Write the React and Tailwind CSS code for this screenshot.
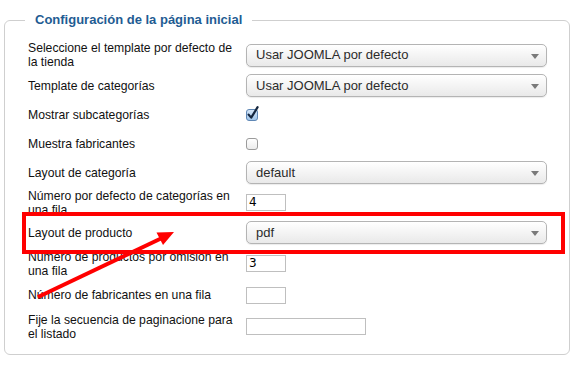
import React from "react";

const Select = ({ value }) => (
  <div className="relative w-[301px] h-[23px] rounded-[5px] border border-[#b4b4b4] bg-gradient-to-b from-white to-[#e9e9e9] shadow-[0_1px_1px_rgba(0,0,0,0.08)] flex items-center pl-[9px] text-[13px] text-[#2b2b2b]">
    <span>{value}</span>
    <svg className="absolute right-[7px] top-[9px]" width="8" height="5" viewBox="0 0 8 5">
      <polygon points="0,0 8,0 4,5" fill="#7a7a7a" />
    </svg>
  </div>
);

const Checkbox = ({ checked }) =>
  checked ? (
    <svg width="14" height="16" viewBox="0 0 14 16" className="-mt-[3px]">
      <defs>
        <linearGradient id="cb" x1="0" y1="0" x2="0" y2="1">
          <stop offset="0" stopColor="#d7e7f8" />
          <stop offset="1" stopColor="#9ec4ea" />
        </linearGradient>
      </defs>
      <rect x="0.5" y="3.5" width="11" height="11" rx="2.5" fill="url(#cb)" stroke="#5f87b5" />
      <path d="M2.6 8.6 L5.2 11.6 L11.6 1.2" fill="none" stroke="#14263f" strokeWidth="2.2" strokeLinecap="round" strokeLinejoin="round" />
    </svg>
  ) : (
    <div className="w-[12px] h-[12px] rounded-[3px] border border-[#9b9b9b] bg-gradient-to-b from-white to-[#ececec]" />
  );

const Input = ({ value, wide }) => (
  <div
    className={`${wide ? "w-[120px]" : "w-[40px]"} h-[17px] border border-[#bfbfbf] bg-white pl-[2px] text-[12px] leading-[15px] text-black`}
    style={{ fontFamily: '"DejaVu Sans", sans-serif' }}
  >
    {value}
  </div>
);

const Row = ({ h, label, children }) => (
  <div className={`flex items-center pl-[3px] ${h}`}>
    <div className="w-[218px] text-[12.2px] leading-[14px] text-[#111]">
      {[].concat(label).map((line, i) => (
        <div key={i} className="whitespace-nowrap">{line}</div>
      ))}
    </div>
    {children}
  </div>
);

export default function App() {
  return (
    <div className="relative w-[576px] h-[366px] bg-white overflow-hidden" style={{ fontFamily: '"Liberation Sans", Arial, sans-serif' }}>
      <fieldset className="ml-[4px] mt-[12px] w-[566px] border border-[#cfcfcf] rounded-[6px] pl-[20px] pt-[12px] pb-[11px]">
        <legend className="px-[10px] text-[13px] leading-[16px] font-bold text-[#1f5c93]">
          Configuración de la página inicial
        </legend>
        <Row h="h-[30px]" label={["Seleccione el template por defecto de", "la tienda"]}>
          <Select value="Usar JOOMLA por defecto" />
        </Row>
        <Row h="h-[31px]" label="Template de categorías">
          <Select value="Usar JOOMLA por defecto" />
        </Row>
        <Row h="h-[28px]" label="Mostrar subcategorías">
          <Checkbox checked />
        </Row>
        <Row h="h-[29px]" label="Muestra fabricantes">
          <Checkbox />
        </Row>
        <Row h="h-[29px]" label="Layout de categoría">
          <Select value="default" />
        </Row>
        <Row h="h-[31px]" label={["Número por defecto de categorías en", "una fila"]}>
          <Input value="4" />
        </Row>
        <Row h="h-[29px]" label="Layout de producto">
          <Select value="pdf" />
        </Row>
        <Row h="h-[33px]" label={["Número de productos por omisión en", "una fila"]}>
          <Input value="3" />
        </Row>
        <Row h="h-[30px]" label="Número de fabricantes en una fila">
          <Input value="" />
        </Row>
        <Row h="h-[33px]" label={["Fije la secuencia de paginacione para", "el listado"]}>
          <Input value="" wide />
        </Row>
      </fieldset>

      {/* resaltado */}
      <div className="absolute left-[22px] top-[212px] w-[543px] h-[42px] border-4 border-[#ff0000] pointer-events-none" />
      <svg className="absolute left-0 top-0 pointer-events-none" width="576" height="366" viewBox="0 0 576 366">
        <line x1="38" y1="297" x2="162" y2="238" stroke="#ff0000" strokeWidth="4" />
        <polygon points="174,232 156.5,232.5 163,245" fill="#ff0000" />
      </svg>
    </div>
  );
}
